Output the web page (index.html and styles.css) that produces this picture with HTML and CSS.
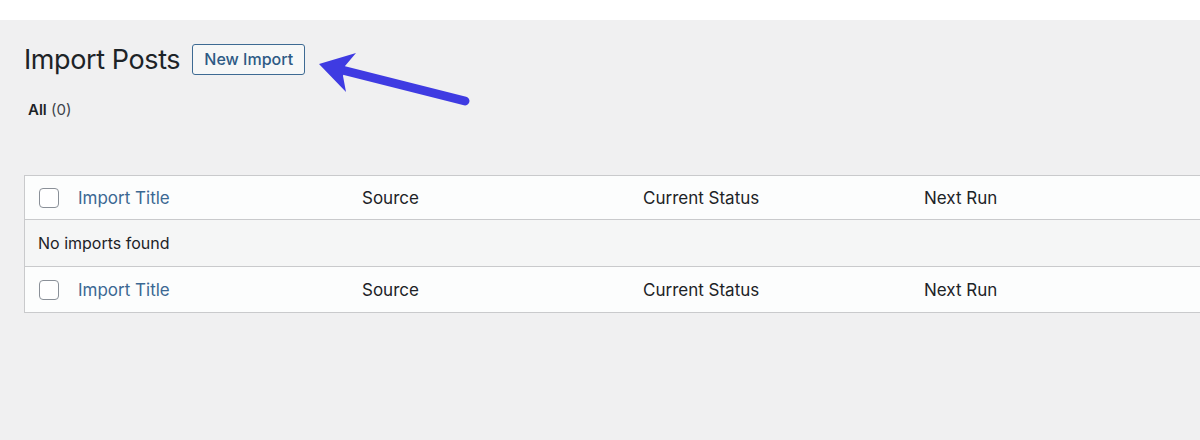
FILE: index.html
```html
<!DOCTYPE html>
<html>
<head>
<meta charset="utf-8">
<link rel="stylesheet" href="styles.css">
</head>
<body>
<div class="topbar"></div>
<main class="wrap">
  <div class="heading">
    <h1 class="title">Import Posts</h1>
    <a class="btn">New Import</a>
    <svg class="arrow" width="180" height="80" viewBox="0 0 180 80">
      <line x1="42" y1="30" x2="165" y2="61" stroke="#3f3be2" stroke-width="9" stroke-linecap="round"/>
      <polygon points="19,24 56,13 45,26 43,36 46,52" fill="#3f3be2"/>
    </svg>
  </div>
  <div class="subsub"><b>All</b> (0)</div>
  <table class="list">
    <thead>
      <tr>
        <th class="cb"><span class="box"></span></th>
        <th class="c1 link">Import Title</th>
        <th class="c2">Source</th>
        <th class="c3">Current Status</th>
        <th class="c4">Next Run</th>
      </tr>
    </thead>
    <tbody>
      <tr class="empty"><td colspan="5">No imports found</td></tr>
    </tbody>
    <tfoot>
      <tr>
        <th class="cb"><span class="box"></span></th>
        <th class="c1 link">Import Title</th>
        <th class="c2">Source</th>
        <th class="c3">Current Status</th>
        <th class="c4">Next Run</th>
      </tr>
    </tfoot>
  </table>
</main>
</body>
</html>
```
FILE: styles.css
```css
html, body { margin: 0; padding: 0; }
body {
  background: #f0f0f1;
  font-family: Inter, "Noto Sans", sans-serif;
  color: #1d2327;
  overflow: hidden;
  width: 1200px;
  height: 440px;
}
.topbar { height: 20px; background: #fff; }
.wrap { padding-left: 24px; }
.heading {
  display: flex;
  align-items: center;
  height: 32px;
  margin-top: 23px;
  position: relative;
}
.title {
  margin: 0;
  font-size: 27px;
  font-weight: 400;
  letter-spacing: -0.4px;
  color: #1d2327;
}
.btn {
  margin-left: 12px;
  height: 29px;
  width: 111px;
  box-sizing: content-box;
  border: 1px solid #3d6a93;
  border-radius: 3px;
  background: #f6f7f7;
  color: #2d5a85;
  font-size: 16px;
  font-weight: 500;
  display: flex;
  align-items: center;
  justify-content: center;
}
.arrow {
  position: absolute;
  left: 276px;
  top: -3px;
  overflow: visible;
}
.subsub {
  margin-top: 25px;
  margin-left: 4px;
  font-size: 15px;
  color: #3c434a;
}
.subsub b { color: #1d2327; font-weight: 600; }
.list {
  margin-top: 56px;
  width: 1200px;
  table-layout: fixed;
  border-collapse: collapse;
  border: 1px solid #c9cacc;
  border-right: none;
  background: #fcfdfd;
  font-size: 17px;
}
.list th {
  font-weight: 400;
  text-align: left;
  padding: 0;
  color: #1d2327;
  white-space: nowrap;
}
.list thead th { height: 43px; }
.list tfoot th { height: 45px; }
.list thead tr { border-bottom: 1px solid #c9cacc; }
.list tfoot tr { border-top: 1px solid #c9cacc; }
.list th.cb { width: 39px; padding-left: 14px; }
.list th.c1 { width: 284px; }
.list th.c2 { width: 281px; }
.list th.c3 { width: 281px; }
.link { color: #3b6893 !important; }
.box {
  display: block;
  width: 18px;
  height: 18px;
  border: 1px solid #8a9098;
  border-radius: 4px;
  background: #fff;
}
.empty td {
  background: #f5f6f6;
  height: 46px;
  padding: 0 0 0 13px;
  font-size: 16px;
  color: #1d2327;
}
```
